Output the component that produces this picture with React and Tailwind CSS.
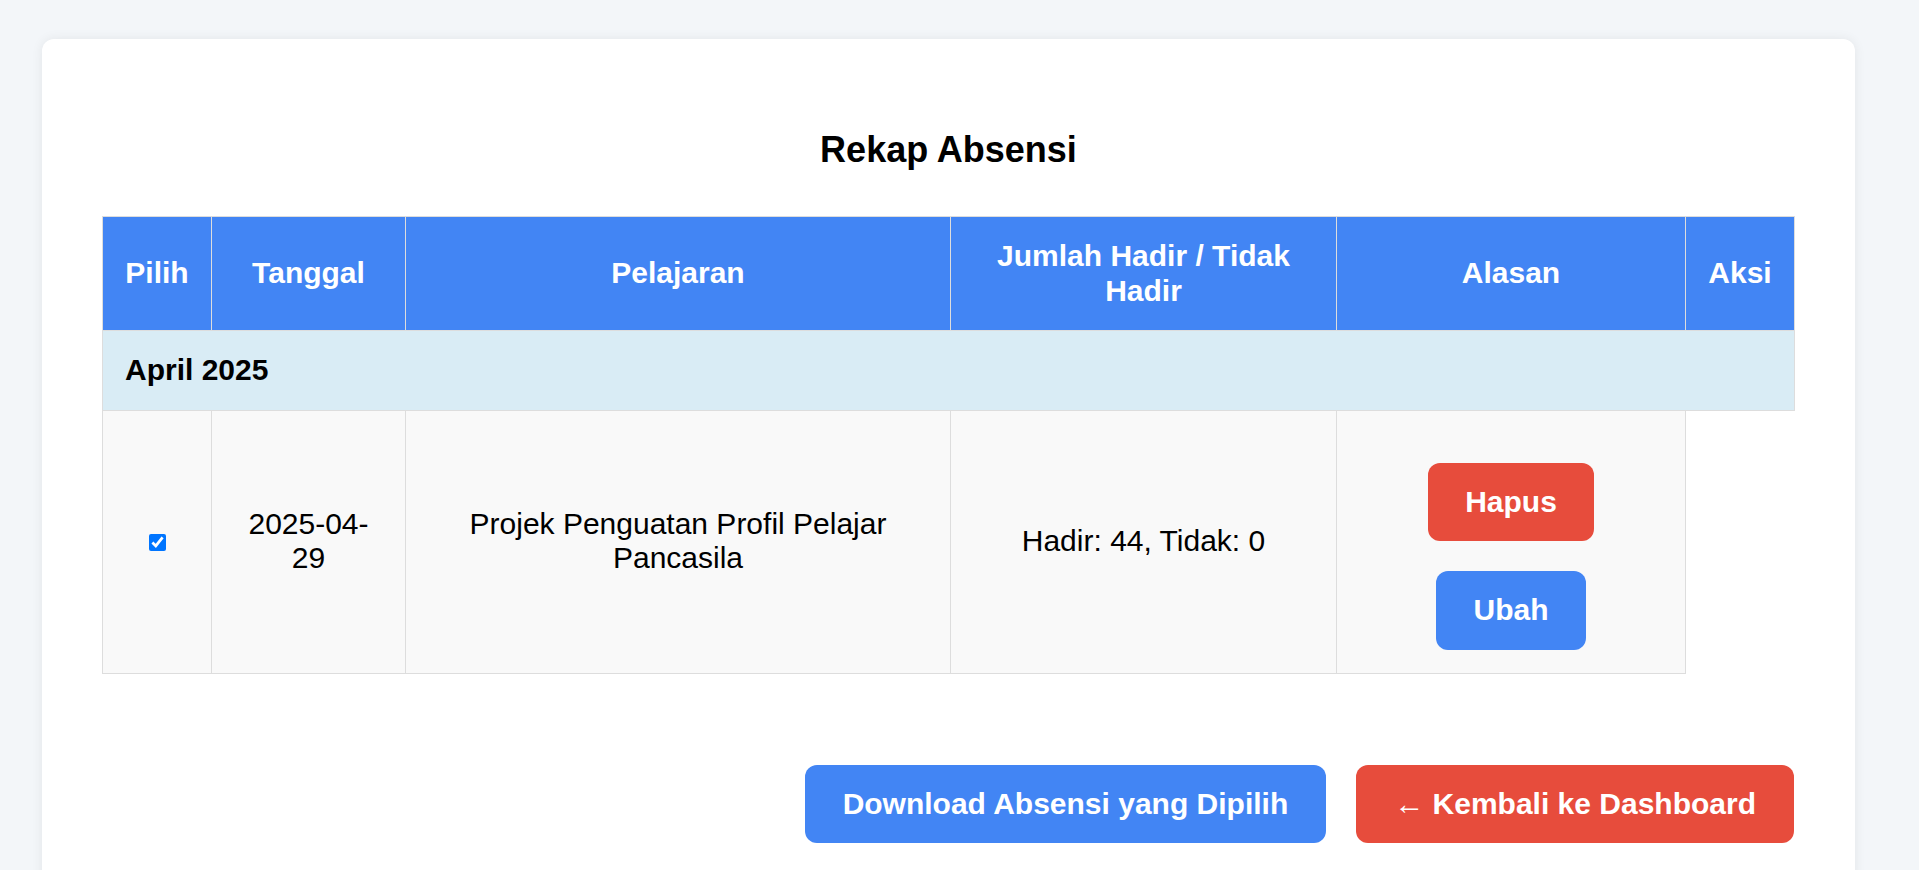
import React from "react";

export default function App() {
  const th =
    "bg-[#4285f4] text-white font-bold text-center align-middle border border-[#dddddd] py-[22px] px-[22px] leading-[34.5px]";
  const td =
    "bg-[#f9f9f9] text-center align-middle border border-[#dddddd] pt-[22px] pb-[23px] px-[22px] leading-[34.5px] text-black";
  return (
    <div className="min-h-screen bg-[#f3f6f9] pt-[39px] pb-[40px] pl-[42px] font-['Liberation_Sans',Arial,sans-serif] text-black">
      <div className="w-[1813px] bg-white rounded-[12px] shadow-[0_0_12px_rgba(0,0,0,0.07)] px-[60px] pt-[60px] pb-[60px]">
        <h2 className="mt-[30px] text-center text-[36px] font-bold leading-[41px] text-black">
          Rekap Absensi
        </h2>
        <table className="mt-[46px] w-[1692px] table-fixed border-collapse text-[30px]">
          <colgroup>
            <col className="w-[109px]" />
            <col className="w-[194px]" />
            <col className="w-[545px]" />
            <col className="w-[386px]" />
            <col className="w-[349px]" />
            <col className="w-[109px]" />
          </colgroup>
          <thead>
            <tr>
              <th className={th}>Pilih</th>
              <th className={th}>Tanggal</th>
              <th className={th}>Pelajaran</th>
              <th className={th}>Jumlah Hadir / Tidak Hadir</th>
              <th className={th}>Alasan</th>
              <th className={th}>Aksi</th>
            </tr>
          </thead>
          <tbody>
            <tr>
              <td
                colSpan={6}
                className="bg-[#d9ecf5] text-left font-bold border border-[#dddddd] py-[22px] px-[22px] leading-[34.5px]"
              >
                April 2025
              </td>
            </tr>
            <tr>
              <td className={td}>
                <input
                  type="checkbox"
                  defaultChecked
                  className="w-[17px] h-[17px] align-middle accent-[#0075ff]"
                />
              </td>
              <td className={td}>2025-04-29</td>
              <td className={td}>Projek Penguatan Profil Pelajar Pancasila</td>
              <td className={td}>Hadir: 44, Tidak: 0</td>
              <td className={td}>
                <div className="mt-[30px] flex flex-col items-center gap-[30px]">
                  <button className="bg-[#e74c3c] text-white font-bold rounded-[12px] px-[37.5px] py-[22px] leading-[34.5px]">
                    Hapus
                  </button>
                  <button className="bg-[#4285f4] text-white font-bold rounded-[12px] px-[37.5px] py-[22px] leading-[34.5px]">
                    Ubah
                  </button>
                </div>
              </td>
            </tr>
          </tbody>
        </table>
        <div className="mt-[91px] w-[1692px] flex justify-end gap-[30px] text-[30px]">
          <button className="bg-[#4285f4] text-white font-bold rounded-[12px] px-[38px] py-[22px] leading-[34.5px]">
            Download Absensi yang Dipilih
          </button>
          <button className="bg-[#e74c3c] text-white font-bold rounded-[12px] px-[38px] py-[22px] leading-[34.5px]">
            ← Kembali ke Dashboard
          </button>
        </div>
      </div>
    </div>
  );
}
